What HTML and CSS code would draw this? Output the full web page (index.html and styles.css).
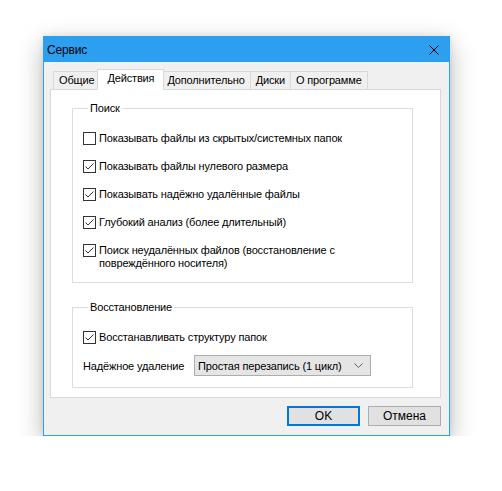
FILE: index.html
```html
<!DOCTYPE html>
<html lang="ru">
<head>
    <meta charset="UTF-8">
    <meta name="viewport" content="width=device-width, initial-scale=1.0">
    <title>Сервис</title>
    <link rel="stylesheet" href="styles.css">
</head>
<body>
    <div class="window">
        <div class="titlebar">
            <span class="title">Сервис</span>
            <svg class="close" viewBox="0 0 10 10" width="10" height="10">
                <path d="M0.5 0.5 L9.5 9.5 M9.5 0.5 L0.5 9.5" stroke="#000" stroke-width="1" fill="none"/>
            </svg>
        </div>
        <div class="content">
            <div class="tabs">
                <div class="tab">Общие</div>
                <div class="tab active">Действия</div>
                <div class="tab">Дополнительно</div>
                <div class="tab">Диски</div>
                <div class="tab">О программе</div>
            </div>
            <div class="panel">
                <fieldset class="group">
                    <legend>Поиск</legend>
                    <div class="check"><span class="box"></span><span class="text">Показывать файлы из скрытых/системных папок</span></div>
                    <div class="check"><span class="box checked"></span><span class="text">Показывать файлы нулевого размера</span></div>
                    <div class="check"><span class="box checked"></span><span class="text">Показывать надёжно удалённые файлы</span></div>
                    <div class="check"><span class="box checked"></span><span class="text">Глубокий анализ (более длительный)</span></div>
                    <div class="check"><span class="box checked"></span><span class="text">Поиск неудалённых файлов (восстановление с<br>повреждённого носителя)</span></div>
                </fieldset>
                <fieldset class="group restore">
                    <legend>Восстановление</legend>
                    <div class="check"><span class="box checked"></span><span class="text">Восстанавливать структуру папок</span></div>
                    <div class="field">
                        <span class="label">Надёжное удаление</span>
                        <div class="combo">
                            <span>Простая перезапись (1 цикл)</span>
                            <svg class="chevron" viewBox="0 0 9 5" width="9" height="5">
                                <path d="M0.5 0.5 L4.5 4.5 L8.5 0.5" stroke="#606060" stroke-width="1" fill="none"/>
                            </svg>
                        </div>
                    </div>
                </fieldset>
            </div>
            <div class="buttons">
                <button class="btn default">OK</button>
                <button class="btn">Отмена</button>
            </div>
        </div>
    </div>
</body>
</html>
```

FILE: styles.css
```css
/* окно диалога */
body {
    margin: 0;
    background: #fff;
    font: 11px "Liberation Sans", Arial, sans-serif;
    letter-spacing: -0.15px;
    color: #000;
    white-space: nowrap;
}
.window {
    width: 407px;
    box-sizing: border-box;
    margin: 36px 0 0 43px;
    border: 1px solid #2c9ff0;
    background: #f0f0f0;
    box-shadow: 0 8px 24px rgba(0, 0, 0, 0.28), 0 0 6px rgba(0, 0, 0, 0.08);
}
.titlebar {
    height: 25px;
    background: #2c9ff0;
    display: flex;
    align-items: center;
    padding-left: 3px;
    font-size: 12px;
}
.title { flex: 1; }
.close { margin-right: 10px; }

.content { padding: 7px 8px 9px 6px; }

/* вкладки */
.tabs {
    display: flex;
    align-items: flex-end;
    height: 20px;
    padding-left: 3px;
}
.tab {
    height: 18px;
    box-sizing: border-box;
    border: 1px solid #d9d9d9;
    border-bottom: none;
    padding: 0 5px;
    line-height: 17px;
    background: #f0f0f0;
    margin-left: -1px;
}
.tab:first-child { margin-left: 0; }
.tab.active {
    position: relative;
    z-index: 1;
    height: 21px;
    margin: 0 -2px -1px -3px;
    padding: 0 9px;
    line-height: 16px;
    background: #fff;
}

.panel {
    height: 309px;
    box-sizing: border-box;
    border: 1px solid #d9d9d9;
    background: #fff;
    padding: 12px 0 0 21px;
}

/* группы */
.group {
    width: 341px;
    box-sizing: border-box;
    margin: 0;
    border: 1px solid #dcdcdc;
    padding: 17px 0 12px 10px;
    min-inline-size: 0;
}
.group legend {
    padding: 0 2px;
    margin-left: 5px;
    line-height: 13px;
}
.group.restore {
    margin-top: 18px;
    padding-bottom: 11px;
}

.check {
    display: flex;
    align-items: flex-start;
    line-height: 13px;
    margin-bottom: 15px;
}
.group .check:last-child { margin-bottom: 0; }
.restore .check { margin-bottom: 11px; }

.box {
    width: 13px;
    height: 13px;
    flex: none;
    box-sizing: border-box;
    border: 1px solid #333;
    background: #fff;
    margin-right: 3px;
}
.box.checked {
    background: #fff url("data:image/svg+xml,%3Csvg xmlns='http://www.w3.org/2000/svg' viewBox='0 0 11 11' width='11' height='11'%3E%3Cpath d='M1.5 5.5 L4 8 L9.5 2.5' stroke='%23333' stroke-width='1' fill='none'/%3E%3C/svg%3E") no-repeat center;
}

.field {
    display: flex;
    align-items: center;
}
.label { width: 111px; flex: none; }
.combo {
    width: 177px;
    height: 21px;
    box-sizing: border-box;
    border: 1px solid #adadad;
    background: #e5e5e5;
    display: flex;
    align-items: center;
    justify-content: space-between;
    padding: 0 7px 0 3px;
}
.chevron { flex: none; }

/* кнопки */
.buttons {
    display: flex;
    justify-content: flex-end;
    gap: 8px;
    margin-top: 8px;
}
.btn {
    width: 73px;
    height: 20px;
    box-sizing: border-box;
    border: 1px solid #adadad;
    background: #e1e1e1;
    font: inherit;
    font-size: 12px;
    color: #000;
    padding: 0;
}
.btn.default { border: 2px solid #0078d7; }
```
